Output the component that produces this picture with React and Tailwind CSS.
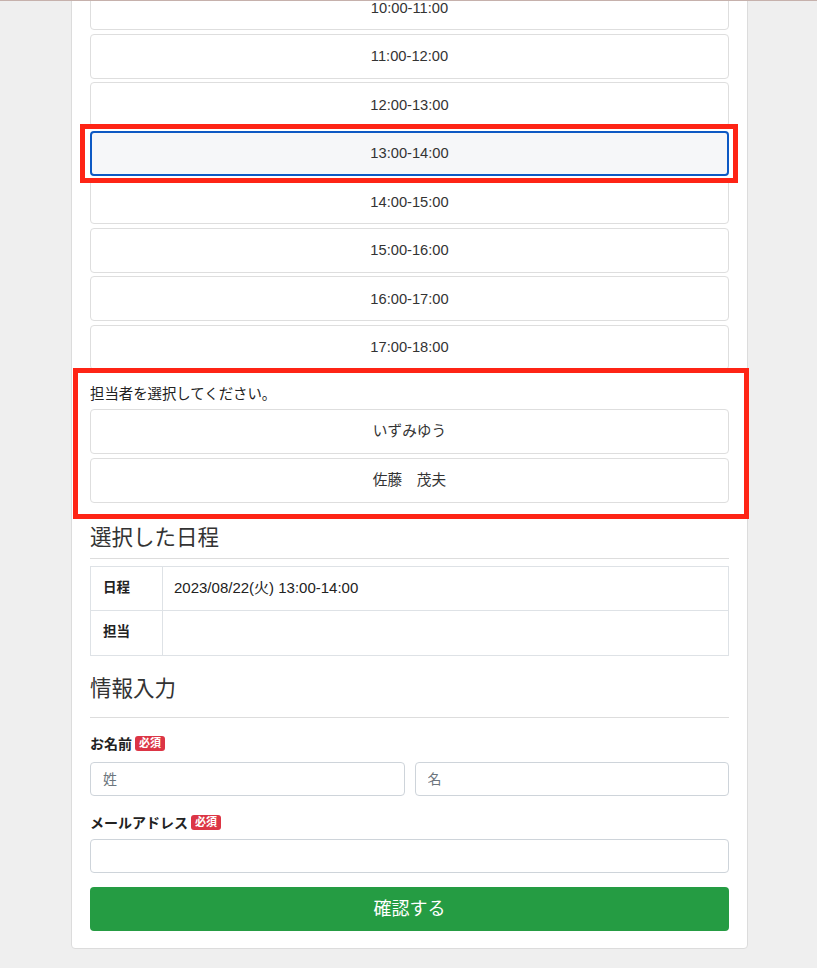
import React from 'react';

const slots = [
  '10:00-11:00',
  '11:00-12:00',
  '12:00-13:00',
  '13:00-14:00',
  '14:00-15:00',
  '15:00-16:00',
  '16:00-17:00',
  '17:00-18:00',
];

const staff = ['いずみゆう', '佐藤　茂夫'];

function SlotButton({ label, selected }) {
  return (
    <button
      type="button"
      className={`w-full h-[45px] rounded-[4px] text-[14.7px] leading-[20px] text-[#333] ${
        selected ? 'border-2 border-[#0d59c4] bg-[#f6f7f9]' : 'border border-[#dedede] bg-white'
      }`}
    >
      {label}
    </button>
  );
}

function Required() {
  return (
    <span className="ml-[3px] inline-flex items-center h-[15px] px-[4px] rounded-[3px] bg-[#dc3545] text-white text-[11px] leading-none font-bold">
      必須
    </span>
  );
}

export default function App() {
  const selected = '13:00-14:00';

  return (
    <div
      className="h-[968px] overflow-hidden bg-[#efefef] border-t border-[#c6b1ac]"
      style={{ fontFamily: '"Liberation Sans", "Noto Sans CJK JP", sans-serif' }}
    >
      <div className="mt-[-41px] ml-[71px] w-[677px] bg-white border border-[#dcdcdc] rounded-[4px] px-[18px] pt-[24px] pb-[17px]">
        {/* 時間帯 */}
        <div className="flex flex-col gap-[3.5px]">
          {slots.map((s) =>
            s === selected ? (
              <div key={s} className="relative">
                <SlotButton label={s} selected />
                <div className="absolute z-10 pointer-events-none -left-[10px] -right-[9px] -top-[7px] -bottom-[7px] border-[5px] border-[#fe2415]" />
              </div>
            ) : (
              <SlotButton key={s} label={s} />
            )
          )}
        </div>

        {/* 担当者 */}
        <div className="relative mt-[14px]">
          <p className="text-[14.4px] leading-[21px] text-[#222]">担当者を選択してください。</p>
          <div className="mt-[4px] flex flex-col gap-[4px]">
            {staff.map((n) => (
              <SlotButton key={n} label={n} />
            ))}
          </div>
          <div className="absolute z-10 pointer-events-none -left-[17px] -right-[20px] -top-[16px] -bottom-[16px] border-[5px] border-[#fe2415]" />
        </div>

        {/* 選択した日程 */}
        <h2 className="mt-[23px] text-[21.5px] leading-[24px] text-[#333]">選択した日程</h2>
        <hr className="mt-[8px] border-[#dddddd]" />
        <table className="mt-[7px] w-full border-collapse text-[15px] text-[#222]">
          <tbody>
            <tr className="h-[44px]">
              <th className="w-[72px] border border-[#dee2e6] px-[12px] text-left font-bold text-[13.5px]">日程</th>
              <td className="border border-[#dee2e6] px-[11px]">2023/08/22(火) 13:00-14:00</td>
            </tr>
            <tr className="h-[45px]">
              <th className="border border-[#dee2e6] px-[12px] text-left font-bold text-[13.5px]">担当</th>
              <td className="border border-[#dee2e6] px-[11px]"></td>
            </tr>
          </tbody>
        </table>

        {/* 情報入力 */}
        <h2 className="mt-[20px] text-[21.5px] leading-[26px] text-[#333]">情報入力</h2>
        <hr className="mt-[15px] border-[#dddddd]" />

        <div className="mt-[16px] flex items-center text-[14px] leading-[20px] font-bold text-[#222]">
          お名前
          <Required />
        </div>
        <div className="mt-[8px] grid grid-cols-2 gap-[10px]">
          <input
            className="h-[34px] rounded-[4px] border border-[#ced4da] px-[12px] text-[14px] placeholder:text-[#6c757d] outline-none"
            placeholder="姓"
          />
          <input
            className="h-[34px] rounded-[4px] border border-[#ced4da] px-[12px] text-[14px] placeholder:text-[#6c757d] outline-none"
            placeholder="名"
          />
        </div>

        <div className="mt-[17px] flex items-center text-[14px] leading-[20px] font-bold text-[#222]">
          メールアドレス
          <Required />
        </div>
        <input
          type="email"
          className="mt-[6px] block w-full h-[34px] rounded-[4px] border border-[#ced4da] px-[12px] text-[14px] outline-none"
        />

        <button
          type="button"
          className="mt-[14px] w-full h-[44px] rounded-[4px] bg-[#259c43] text-white text-[18px] leading-[24px]"
        >
          確認する
        </button>
      </div>
    </div>
  );
}
